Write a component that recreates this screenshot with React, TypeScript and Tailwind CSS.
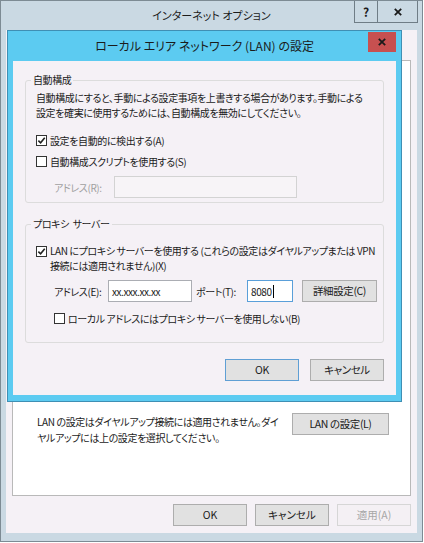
const font = "font-['Noto_Sans_CJK_JP','Noto_Sans',sans-serif] [font-feature-settings:'palt']";
const txt = 'text-[10px] tracking-[-0.4px]';

function Checkbox({ checked }: { checked?: boolean }) {
  return (
    <span className="flex h-[11px] w-[11px] shrink-0 items-center justify-center border border-[#333] bg-white">
      {checked && (
        <svg viewBox="0 0 10 10" className="h-[9px] w-[9px]">
          <path d="M1.5 5.2 L4 7.6 L8.6 2" fill="none" stroke="#222" strokeWidth="1.8" />
        </svg>
      )}
    </span>
  );
}

function Button({ label, primary, disabled, w = 'w-[74px]' }: { label: string; primary?: boolean; disabled?: boolean; w?: string }) {
  return (
    <div
      className={`flex h-[22px] ${w} items-center justify-center border text-[10.5px] ${
        disabled
          ? 'border-[#d6d6d6] bg-[#f4f0f4] text-[#a6a6a6]'
          : primary
          ? 'border-[#5f9fd4] bg-[#e1e1e1] text-[#1b1b1b]'
          : 'border-[#adadad] bg-[#e1e1e1] text-[#1b1b1b]'
      }`}
    >
      {label}
    </div>
  );
}

function GroupBox({ title, className, children }: { title: string; className: string; children: React.ReactNode }) {
  return (
    <div className={`relative rounded-[3px] border border-[#dcdcdc] ${className}`}>
      <span className="absolute left-[5px] top-[-9px] whitespace-pre bg-[#f5f1f6] px-[2px] leading-[16px]">{title}</span>
      {children}
    </div>
  );
}

function LanDialog() {
  return (
    <div className="absolute left-[7px] top-[30px] flex h-[372px] w-[395px] flex-col border border-[#3f8fb4] bg-[#5ccbf1]">
      <div className="relative flex h-[30px] items-center justify-center text-[12px] text-[#1b1b1b]">
        ローカル エリア ネットワーク (LAN) の設定
        <div className="absolute right-[5px] top-[1px] flex h-[20px] w-[28px] items-center justify-center bg-[#c75050]">
          <svg viewBox="0 0 10 10" className="h-[8px] w-[8px]">
            <path d="M1 1 L9 9 M9 1 L1 9" stroke="#1a1a1a" strokeWidth="2.2" />
          </svg>
        </div>
      </div>
      <div className={`mx-[5px] mb-[6px] flex flex-1 flex-col bg-[#f5f1f6] px-[12px] pt-[19px] text-[#1b1b1b] ${txt}`}>
        <GroupBox title="自動構成" className="h-[123px] pl-[10px] pt-[9px]">
          <p className="whitespace-nowrap leading-[15px]">
            自動構成にすると、手動による設定事項を上書きする場合があります。手動による
            <br />
            設定を確実に使用するためには、自動構成を無効にしてください。
          </p>
          <div className="mt-[12px] flex h-[16px] items-center gap-[3px]">
            <Checkbox checked />
            <span>設定を自動的に検出する(A)</span>
          </div>
          <div className="mt-[5px] flex h-[16px] items-center gap-[3px]">
            <Checkbox />
            <span>自動構成スクリプトを使用する(S)</span>
          </div>
          <div className="mt-[7px] flex items-center pl-[18px] text-[#a0a0a0]">
            <span className="w-[60px] whitespace-nowrap">アドレス(R):</span>
            <div className="h-[22px] w-[183px] border border-[#d3d3d3] bg-[#f7f4f7]" />
          </div>
        </GroupBox>

        <GroupBox title="プロキシ  サーバー" className="mt-[21px] h-[119px] pl-[10px] pt-[18px]">
          <div className="flex gap-[3px] leading-[15px]">
            <div className="pt-[3px]">
              <Checkbox checked />
            </div>
            <span className="whitespace-pre">
              {'LAN にプロキシ サーバーを使用する (これらの設定はダイヤルアップまたは VPN\n接続には適用されません)(X)'}
            </span>
          </div>
          <div className="mt-[7px] flex items-center pl-[18px]">
            <span className="w-[54px] whitespace-nowrap">アドレス(E):</span>
            <div className="flex h-[22px] w-[84px] items-center border border-[#abadb3] bg-white px-[3px]">xx.xxx.xx.xx</div>
            <span className="ml-[4px] w-[51px] whitespace-nowrap">ポート(T):</span>
            <div className="flex h-[22px] w-[46px] items-center border border-[#5a9fd9] bg-white px-[3px]">
              8080<span className="ml-[1px] h-[13px] w-[1px] bg-black" />
            </div>
            <div className="ml-[9px]">
              <Button label="詳細設定(C)" w="w-[75px]" />
            </div>
          </div>
          <div className="mt-[8px] flex h-[16px] items-center gap-[3px] pl-[18px]">
            <Checkbox />
            <span className="whitespace-pre">ローカル アドレスにはプロキシ サーバーを使用しない(B)</span>
          </div>
        </GroupBox>

        <div className="mt-[16px] flex justify-end gap-[11px]">
          <Button label="OK" primary />
          <Button label="キャンセル" />
        </div>
      </div>
    </div>
  );
}

export default function App() {
  return (
    <div className={`relative h-[543px] w-[424px] overflow-hidden bg-white ${font}`}>
      <div className="flex h-[542px] w-[423px] flex-col border border-[#7d8b94] bg-[#cad9e3]">
        <div className="relative flex h-[29px] items-center justify-center text-[11px] text-[#1b1b1b]">
          インターネット オプション
          <div className="absolute right-[4px] top-[0px] flex h-[22px]">
            <div className="flex w-[24px] items-center justify-center border border-t-0 border-[#6f7d86] text-[12px] font-bold">?</div>
            <div className="flex w-[40px] items-center justify-center border border-l-0 border-t-0 border-[#6f7d86]">
              <svg viewBox="0 0 10 10" className="h-[8px] w-[8px]">
                <path d="M1 1 L9 9 M9 1 L1 9" stroke="#1a1a1a" strokeWidth="2.2" />
              </svg>
            </div>
          </div>
        </div>
        <div className="mx-[5px] mb-[8px] flex flex-1 flex-col bg-[#f5f1f6] px-[6px] pt-[30px]">
          <div className="flex h-[436px] flex-col justify-end border border-[#b9b9b9] bg-white pb-[49px] pl-[24px] pr-[21px]">
            <div className={`flex items-start justify-between leading-[16px] text-[#1b1b1b] ${txt}`}>
              <p className="whitespace-nowrap pt-[1px]">
                LAN の設定はダイヤルアップ接続には適用されません。ダイ
                <br />
                ヤルアップには上の設定を選択してください。
              </p>
              <Button label="LAN の設定(L)" w="w-[97px]" />
            </div>
          </div>
          <div className="mt-[8px] flex justify-end gap-[8px]">
            <Button label="OK" />
            <Button label="キャンセル" />
            <Button label="適用(A)" disabled />
          </div>
        </div>
      </div>
      <LanDialog />
    </div>
  );
}
